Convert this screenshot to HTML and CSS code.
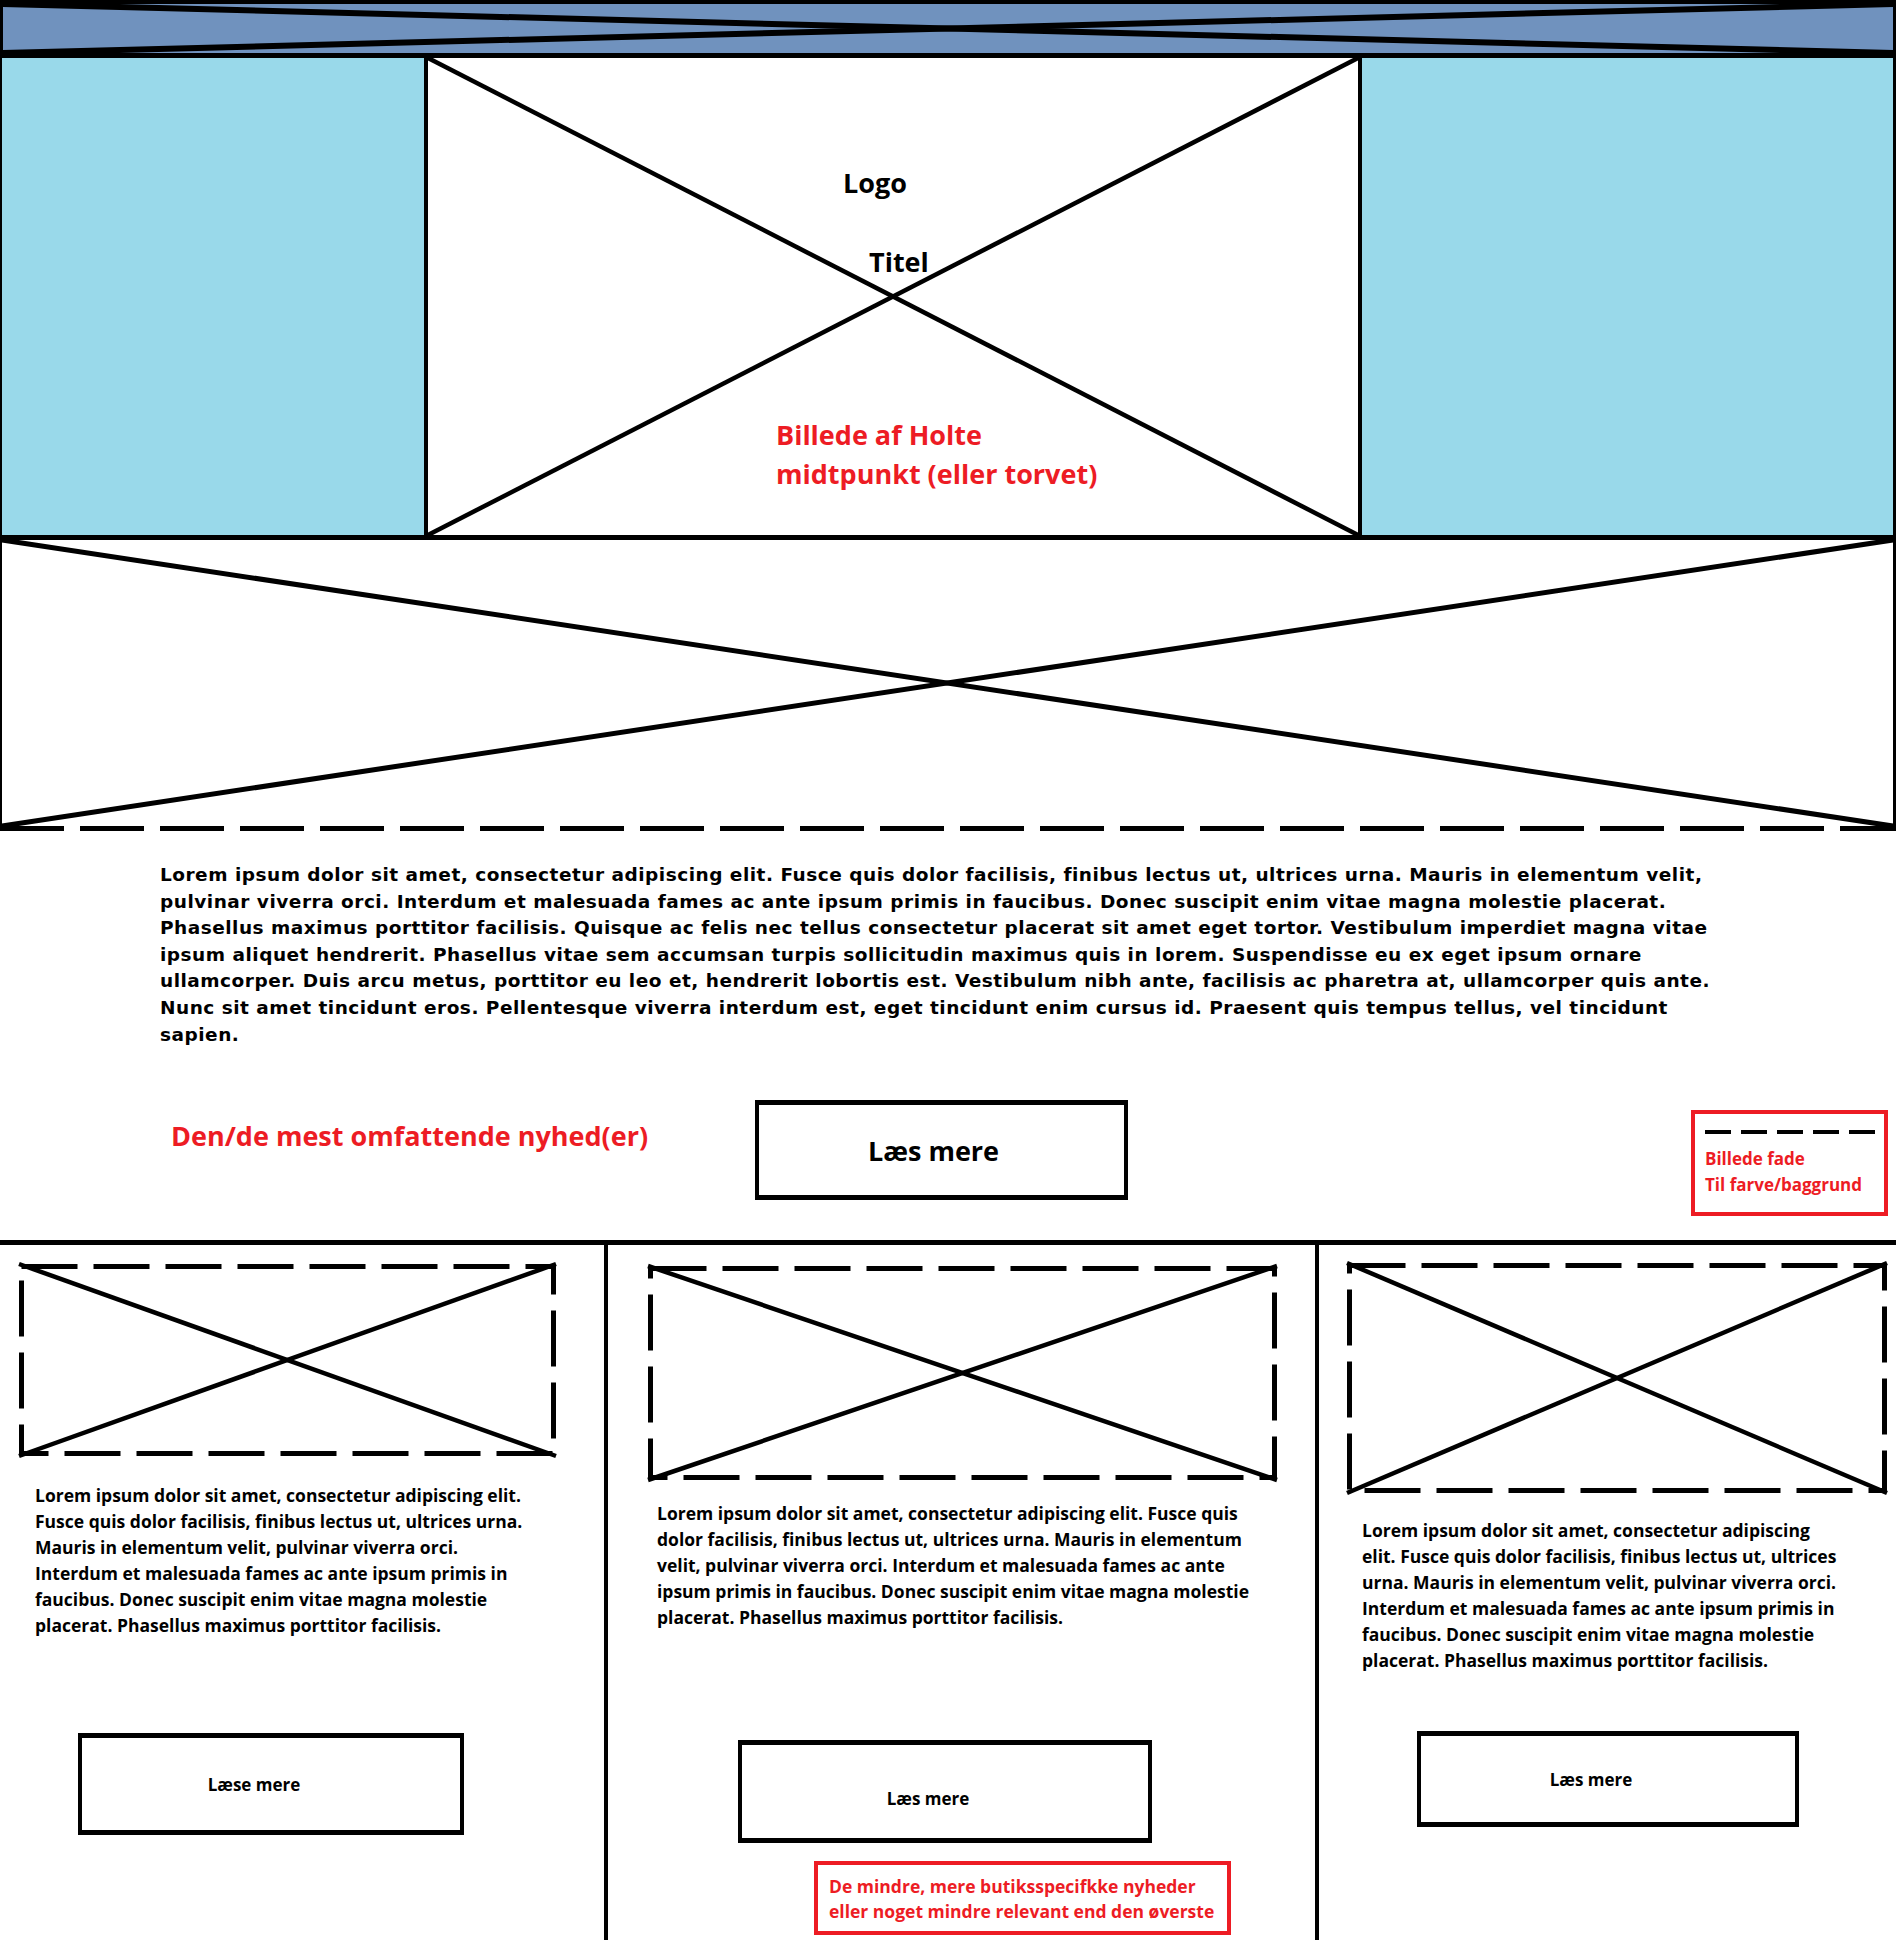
FILE: index.html
```html
<!DOCTYPE html>
<html lang="da">
<head>
    <meta charset="UTF-8">
    <meta name="viewport" content="width=device-width, initial-scale=1.0">
    <title>Holte forside - wireframe</title>
    <link rel="stylesheet" href="styles.css">
</head>
<body>
    <div class="page">
        <!-- topbjælke -->
        <header class="topbar">
            <svg class="cross"><line x1="0" y1="0" x2="100%" y2="100%"/><line x1="0" y1="100%" x2="100%" y2="0"/></svg>
        </header>

        <section class="hero">
            <div class="hero-side hero-side-left"></div>
            <div class="hero-image">
                <svg class="cross"><line x1="0" y1="0" x2="100%" y2="100%"/><line x1="0" y1="100%" x2="100%" y2="0"/></svg>
                <div class="hero-logo">Logo</div>
                <h1 class="hero-title">Titel</h1>
                <p class="hero-note">Billede af Holte<br>midtpunkt (eller torvet)</p>
            </div>
            <div class="hero-side hero-side-right"></div>
        </section>

        <div class="banner">
            <svg class="cross"><line x1="0" y1="0" x2="100%" y2="100%"/><line x1="0" y1="100%" x2="100%" y2="0"/></svg>
        </div>
        <div class="dash-rule"></div>

        <section class="intro">
            <p>Lorem ipsum dolor sit amet, consectetur adipiscing elit. Fusce quis dolor facilisis, finibus lectus ut, ultrices urna. Mauris in elementum velit, pulvinar viverra orci. Interdum et malesuada fames ac ante ipsum primis in faucibus. Donec suscipit enim vitae magna molestie placerat. Phasellus maximus porttitor facilisis. Quisque ac felis nec tellus consectetur placerat sit amet eget tortor. Vestibulum imperdiet magna vitae ipsum aliquet hendrerit. Phasellus vitae sem accumsan turpis sollicitudin maximus quis in lorem. Suspendisse eu ex eget ipsum ornare ullamcorper. Duis arcu metus, porttitor eu leo et, hendrerit lobortis est. Vestibulum nibh ante, facilisis ac pharetra at, ullamcorper quis ante. Nunc sit amet tincidunt eros. Pellentesque viverra interdum est, eget tincidunt enim cursus id. Praesent quis tempus tellus, vel tincidunt sapien.</p>
        </section>

        <section class="feature">
            <h2 class="feature-title">Den/de mest omfattende nyhed(er)</h2>
            <a class="btn btn-large" href="#">Læs mere</a>
            <div class="note note-fade">
                <span class="note-dash"></span>
                Billede fade<br>Til farve/baggrund
            </div>
        </section>

        <section class="news">
            <article class="news-col news-col-1">
                <div class="thumb">
                    <svg class="cross dashed"><rect x="2.5" y="2.5"/><line x1="0" y1="0" x2="100%" y2="100%"/><line x1="0" y1="100%" x2="100%" y2="0"/></svg>
                </div>
                <p class="news-text">Lorem ipsum dolor sit amet, consectetur adipiscing elit. Fusce quis dolor facilisis, finibus lectus ut, ultrices urna. Mauris in elementum velit, pulvinar viverra orci. Interdum et malesuada fames ac ante ipsum primis in faucibus. Donec suscipit enim vitae magna molestie placerat. Phasellus maximus porttitor facilisis.</p>
                <a class="btn btn-small" href="#">Læse mere</a>
            </article>

            <article class="news-col news-col-2">
                <div class="thumb">
                    <svg class="cross dashed"><rect x="2.5" y="2.5"/><line x1="0" y1="0" x2="100%" y2="100%"/><line x1="0" y1="100%" x2="100%" y2="0"/></svg>
                </div>
                <p class="news-text">Lorem ipsum dolor sit amet, consectetur adipiscing elit. Fusce quis dolor facilisis, finibus lectus ut, ultrices urna. Mauris in elementum velit, pulvinar viverra orci. Interdum et malesuada fames ac ante ipsum primis in faucibus. Donec suscipit enim vitae magna molestie placerat. Phasellus maximus porttitor facilisis.</p>
                <a class="btn btn-small" href="#">Læs mere</a>
                <div class="note note-small">De mindre, mere butiksspecifkke nyheder<br>eller noget mindre relevant end den øverste</div>
            </article>

            <article class="news-col news-col-3">
                <div class="thumb">
                    <svg class="cross dashed"><rect x="2.5" y="2.5"/><line x1="0" y1="0" x2="100%" y2="100%"/><line x1="0" y1="100%" x2="100%" y2="0"/></svg>
                </div>
                <p class="news-text">Lorem ipsum dolor sit amet, consectetur adipiscing elit. Fusce quis dolor facilisis, finibus lectus ut, ultrices urna. Mauris in elementum velit, pulvinar viverra orci. Interdum et malesuada fames ac ante ipsum primis in faucibus. Donec suscipit enim vitae magna molestie placerat. Phasellus maximus porttitor facilisis.</p>
                <a class="btn btn-small" href="#">Læs mere</a>
            </article>
        </section>
    </div>
</body>
</html>
```

FILE: styles.css
```css
:root {
    --ink: #000;
    --blue: #7092be;
    --sky: #99d9ea;
    --red: #ed1c24;
}

* {
    margin: 0;
    padding: 0;
    box-sizing: border-box;
}

body {
    font-family: 'Open Sans', 'Lato', sans-serif;
    font-weight: 700;
    color: var(--ink);
    background: #fff;
}

.page {
    width: 1896px;
    height: 1940px;
    overflow: hidden;
}

/* kryds = billede-pladsholder */
.cross {
    position: absolute;
    inset: 0;
    width: 100%;
    height: 100%;
    overflow: visible;
}

.cross line {
    stroke: var(--ink);
    stroke-width: 4.5;
}

.cross rect {
    width: calc(100% - 5px);
    height: calc(100% - 5px);
    fill: none;
    stroke: var(--ink);
    stroke-width: 5;
    stroke-dasharray: 56 16;
}

.topbar {
    position: relative;
    height: 58px;
    background: var(--blue);
    border: solid var(--ink);
    border-width: 4px 3px 5px 3px;
}

.topbar .cross line {
    stroke-width: 6;
}

.hero {
    display: flex;
    height: 482px;
    border-bottom: 5px solid var(--ink);
}

.hero-side {
    background: var(--sky);
}

.hero-side-left {
    width: 424px;
    border-left: 2px solid var(--ink);
}

.hero-side-right {
    flex: 1;
    border-right: 3px solid var(--ink);
}

.hero-image {
    position: relative;
    width: 938px;
    border-left: 4px solid var(--ink);
    border-right: 4px solid var(--ink);
    display: flex;
    flex-direction: column;
    font-size: 27px;
    line-height: 1.2;
}

.hero-logo {
    position: relative;
    margin: 109px 0 0 415px;
}

.hero-title {
    position: relative;
    font-size: 27px;
    margin: 47px 0 0 441px;
}

.hero-note {
    position: relative;
    color: var(--red);
    line-height: 39px;
    margin: 136px 0 0 348px;
}

.banner {
    position: relative;
    height: 286px;
    border-left: 2px solid var(--ink);
    border-right: 3px solid var(--ink);
}

.banner .cross line {
    stroke-width: 5;
}

.dash-rule {
    height: 5px;
    background: repeating-linear-gradient(90deg, var(--ink) 0 64px, transparent 64px 80px);
}

.intro {
    padding: 31px 0 0 160px;
}

.intro p {
    font-family: 'DejaVu Sans', sans-serif;
    font-size: 18.5px;
    letter-spacing: 0.5px;
    line-height: 26.6px;
    width: 1575px;
}

.feature {
    display: flex;
    align-items: flex-start;
    height: 192px;
    padding: 52px 0 0 171px;
}

.feature-title {
    width: 584px;
    margin-top: 20px;
    color: var(--red);
    font-size: 27px;
    line-height: 32px;
}

.btn {
    display: flex;
    align-items: center;
    justify-content: center;
    color: var(--ink);
    text-decoration: none;
    border: solid var(--ink);
    border-width: 5px 4px;
}

.btn-large {
    width: 373px;
    height: 100px;
    font-size: 27px;
    padding-right: 16px;
}

.btn-small {
    height: 102px;
    font-size: 17px;
    padding-right: 34px;
}

.note {
    border: 4px solid var(--red);
    color: var(--red);
    font-size: 17px;
}

.note-fade {
    width: 197px;
    height: 106px;
    margin: 10px 0 0 563px;
    padding: 16px 4px 0 10px;
    line-height: 26px;
}

.note-dash {
    display: block;
    height: 4px;
    margin-bottom: 12px;
    background: repeating-linear-gradient(90deg, var(--ink) 0 26px, transparent 26px 36px);
}

.note-small {
    width: 417px;
    height: 74px;
    margin: 18px 0 0 206px;
    padding: 9px 0 0 11px;
    font-size: 17.5px;
    line-height: 25px;
}

/* nyhedskolonner */
.news {
    display: flex;
    height: 700px;
    border-top: 5px solid var(--ink);
}

.news-col {
    display: flex;
    flex-direction: column;
    align-items: flex-start;
}

.news-col + .news-col {
    border-left: 4px solid var(--ink);
}

.thumb {
    position: relative;
}

.news-text {
    font-size: 17.5px;
    line-height: 26px;
}

.news-col-1 {
    width: 604px;
    padding-top: 19px;
}

.news-col-1 .thumb {
    width: 537px;
    height: 192px;
    margin-left: 19px;
}

.news-col-1 .news-text {
    width: 488px;
    height: 251px;
    margin: 26px 0 0 35px;
}

.news-col-1 .btn {
    width: 386px;
    margin-left: 78px;
}

.news-col-2 {
    width: 711px;
    padding-top: 21px;
}

.news-col-2 .thumb {
    width: 629px;
    height: 214px;
    margin-left: 40px;
}

.news-col-2 .news-text {
    width: 598px;
    height: 240px;
    margin: 20px 0 0 49px;
}

.news-col-2 .btn {
    width: 414px;
    height: 103px;
    margin-left: 130px;
    padding-top: 14px;
}

.news-col-3 {
    flex: 1;
    padding-top: 18px;
    border-right: 3px solid transparent;
}

.news-col-3 .thumb {
    width: 540px;
    height: 230px;
    margin-left: 28px;
}

.news-col-3 .news-text {
    width: 479px;
    height: 214px;
    margin: 24px 0 0 43px;
}

.news-col-3 .btn {
    width: 382px;
    height: 96px;
    margin-left: 98px;
}
```
